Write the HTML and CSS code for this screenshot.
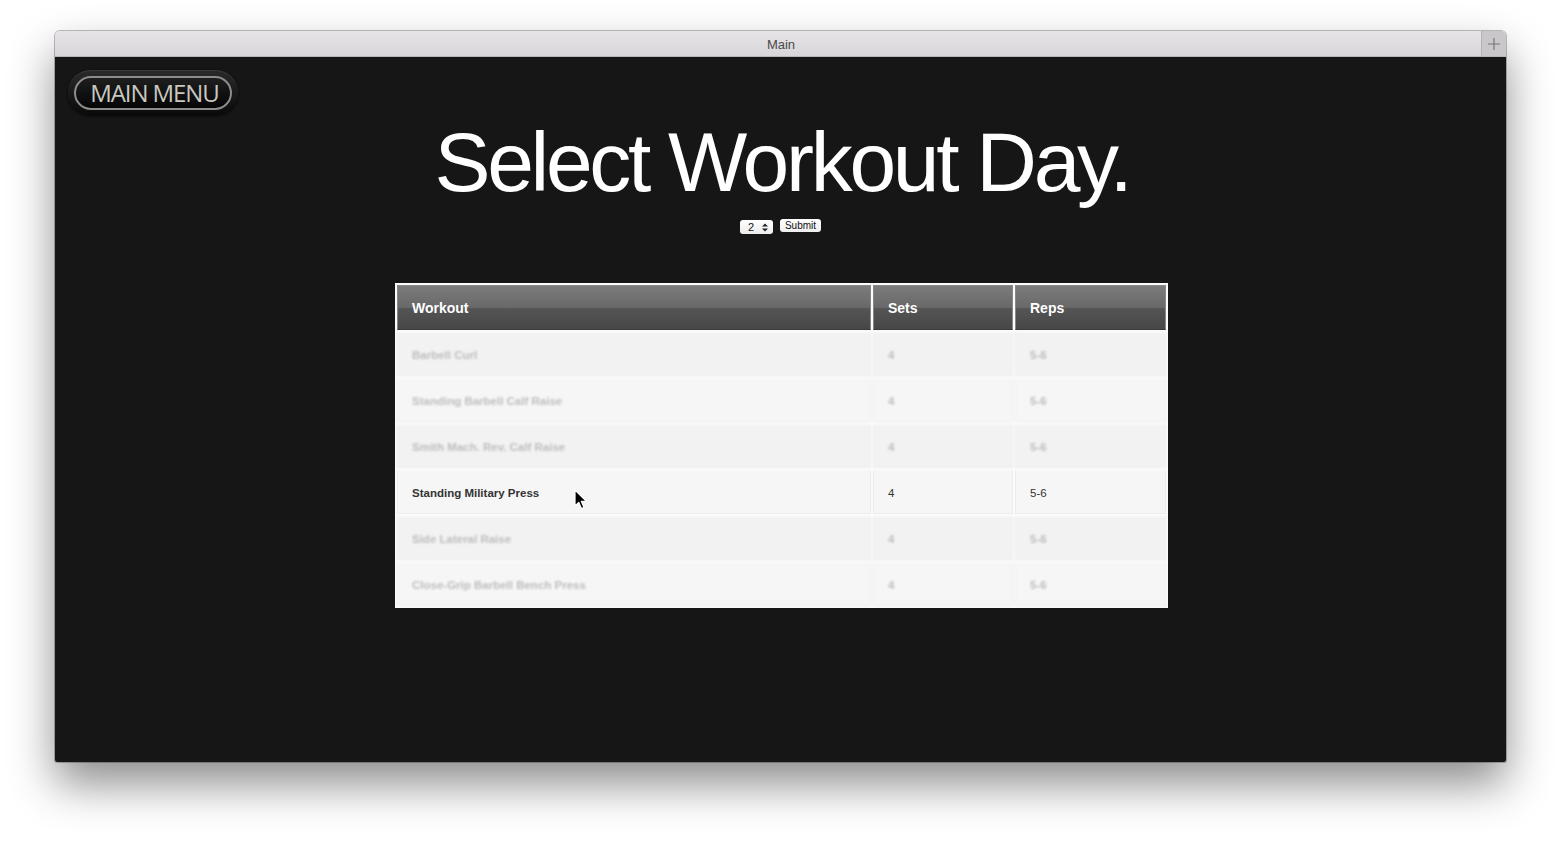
FILE: index.html
```html
<!DOCTYPE html>
<html>
<head>
<meta charset="utf-8">
<link rel="stylesheet" href="styles.css">
</head>
<body>
<div class="window">
  <div class="titlebar">
    <div class="title">Main</div>
    <div class="plus"><svg width="12" height="12" viewBox="0 0 12 12"><path d="M6 0v12M0 6h12" stroke="#777" stroke-width="1.2"/></svg></div>
  </div>
  <div class="content">
    <div class="header">
      <div class="menu-btn"><span class="menu-inner">MAIN MENU</span></div>
      <div class="center">
        <h1 class="heading">Select Workout Day.</h1>
        <div class="form">
          <span class="select">2<svg width="6" height="9" viewBox="0 0 6 9"><path d="M0 3.5L3 0.5L6 3.5ZM0 5.5L3 8.5L6 5.5Z" fill="#222"/></svg></span>
          <span class="submit">Submit</span>
        </div>
      </div>
      <div></div>
    </div>
    <div class="table-wrap">
      <table class="workouts">
        <thead>
          <tr><th class="c1">Workout</th><th class="c2">Sets</th><th class="c3">Reps</th></tr>
        </thead>
        <tbody>
          <tr class="odd"><td>Barbell Curl</td><td>4</td><td>5-6</td></tr>
          <tr class="even"><td>Standing Barbell Calf Raise</td><td>4</td><td>5-6</td></tr>
          <tr class="odd"><td>Smith Mach. Rev. Calf Raise</td><td>4</td><td>5-6</td></tr>
          <tr class="even hover"><td class="cursor-cell">Standing Military Press<svg class="cursor" width="14" height="22" viewBox="0 0 14 22"><path d="M1 1L1 17L4.8 13.4L7.4 19.6L10 18.5L7.4 12.4L12.4 12.4Z" fill="#000" stroke="#fff" stroke-width="1.2" stroke-linejoin="round"/></svg></td><td>4</td><td>5-6</td></tr>
          <tr class="odd"><td>Side Lateral Raise</td><td>4</td><td>5-6</td></tr>
          <tr class="even"><td>Close-Grip Barbell Bench Press</td><td>4</td><td>5-6</td></tr>
        </tbody>
      </table>
    </div>
  </div>
</div>
</body>
</html>
```

FILE: styles.css
```css
html, body {
  margin: 0;
  padding: 0;
  background: #ffffff;
}
body {
  width: 1561px;
  height: 842px;
  overflow: hidden;
  font-family: "Liberation Sans", Arial, sans-serif;
}
.window {
  margin: 31px 0 0 55px;
  width: 1451px;
  height: 731px;
  border-radius: 5px 5px 2px 2px;
  overflow: hidden;
  box-shadow: 0 22px 45px rgba(0,0,0,0.45), 0 0 0 1px rgba(0,0,0,0.25);
  display: flex;
  flex-direction: column;
}
.titlebar {
  height: 26px;
  flex: 0 0 26px;
  background: linear-gradient(#e6e4e6, #d8d6d8);
  border-bottom: 1px solid #b8b6b8;
  box-sizing: border-box;
  display: flex;
  align-items: stretch;
}
.title {
  flex: 1;
  text-align: center;
  font-size: 13px;
  line-height: 27px;
  color: #4a4a4a;
  padding-left: 26px;
  font-family: "Liberation Sans", Arial, sans-serif;
}
.plus {
  width: 24px;
  background: #c9c7c9;
  border-left: 1px solid #b4b2b4;
  display: flex;
  align-items: center;
  justify-content: center;
}
.content {
  flex: 1;
  background: #161616;
  padding-top: 13px;
}
.header {
  display: grid;
  grid-template-columns: 1fr auto 1fr;
  align-items: start;
}
.menu-btn {
  justify-self: start;
  margin-left: 13px;
  width: 170px;
  height: 45px;
  box-sizing: border-box;
  border-radius: 23px;
  background: linear-gradient(#2a2a2a, #0a0a0a);
  box-shadow: 0 1px 3px rgba(0,0,0,0.8), inset 0 1px 0 rgba(255,255,255,0.08);
  display: flex;
  align-items: center;
  justify-content: center;
}
.menu-inner {
  width: 158px;
  height: 34px;
  box-sizing: border-box;
  border: 2px solid #8c8c88;
  border-radius: 17px;
  background: linear-gradient(#1e1e1e, #050505);
  color: #c8c8c0;
  font-family: "Open Sans", "Liberation Sans", sans-serif;
  font-size: 24px;
  letter-spacing: -1.1px;
  line-height: 30px;
  text-align: center;
  padding-left: 3px;
  margin-top: 1px;
}
.center {
  display: flex;
  flex-direction: column;
  align-items: center;
}
.heading {
  margin: 50px 0 0 0;
  font-family: "Liberation Sans", Arial, sans-serif;
  font-weight: normal;
  font-size: 84px;
  line-height: 85px;
  color: #ffffff;
  letter-spacing: -3.3px;
  white-space: nowrap;
  padding-left: 3px;
}
.form {
  margin-top: 14px;
  display: flex;
  align-items: flex-start;
  gap: 7px;
  height: 15px;
}
.select {
  width: 33px;
  height: 14px;
  box-sizing: border-box;
  background: linear-gradient(#ffffff, #ececec);
  border-radius: 3px;
  font-size: 11px;
  line-height: 14px;
  color: #111;
  display: flex;
  align-items: center;
  justify-content: space-between;
  padding: 0 5px 0 8px;
  margin-top: 1px;
}
.submit {
  height: 13px;
  box-sizing: border-box;
  padding: 0 5px;
  background: linear-gradient(#ffffff, #eeeeee);
  border-radius: 3px;
  font-size: 10px;
  line-height: 13px;
  color: #111;
}
.table-wrap {
  display: flex;
  justify-content: center;
  margin-top: 49px;
  padding-left: 2px;
}
.workouts {
  border-collapse: separate;
  border-spacing: 2px;
  background: #fbfbfb;
  width: 773px;
  table-layout: fixed;
  font-size: 11.5px;
  font-weight: bold;
}
.workouts th {
  height: 45px;
  box-sizing: border-box;
  text-align: left;
  padding: 0 14px;
  color: #ffffff;
  font-size: 14px;
  background: linear-gradient(#7c7c7c 0%, #686868 50%, #555555 51%, #474747 100%);
  border: 1px solid #888888;
  border-bottom-color: #3a3a3a;
}
.c1 { width: 474px; }
.c2 { width: 140px; }
.c3 { width: 151px; }
.workouts td {
  height: 44px;
  box-sizing: border-box;
  padding: 1px 14px 0;
  color: #bdbdbd;
  filter: blur(0.9px);
  border: 1px solid #ececec;
  border-top-color: #f8f8f8;
}
.workouts tr.odd td { background: #f2f2f2; }
.workouts tr.even td { background: #f6f6f6; }
.workouts tr.hover td {
  color: #333333;
  filter: none;
  font-weight: normal;
}
.workouts tr.hover td.cursor-cell {
  font-weight: bold;
}
.cursor-cell {
  position: relative;
}
.cursor {
  position: absolute;
  left: 176px;
  top: 18px;
}
```
